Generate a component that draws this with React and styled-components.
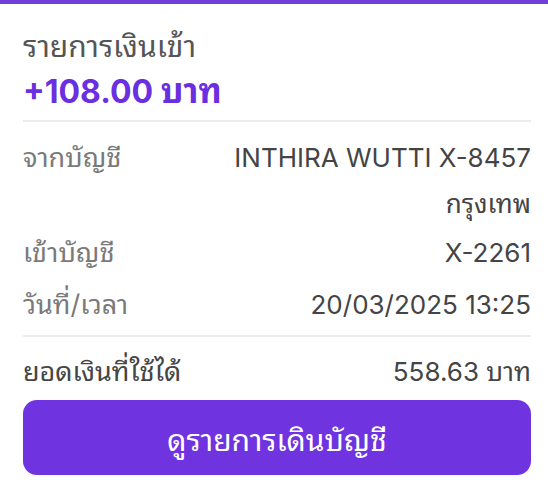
import React from "react";
import styled, { createGlobalStyle } from "styled-components";

const GlobalStyle = createGlobalStyle`
  html, body {
    margin: 0;
    padding: 0;
    background: #ffffff;
  }
  body {
    font-family: Inter, "Noto Sans Thai Looped", "Noto Sans Thai", "Noto Sans", sans-serif;
  }
`;

const Page = styled.div`
  width: 548px;
  height: 492px;
  box-sizing: border-box;
  border-top: 4px solid #7040d8;
  padding: 21px 17px 0 23px;
  display: flex;
  flex-direction: column;
`;

const Title = styled.div`
  font-size: 30px;
  line-height: 42px;
  color: #555555;
`;

const Amount = styled.div`
  font-size: 32px;
  line-height: 48px;
  height: 48px;
  font-weight: 700;
  color: #6a2fe0;
  padding-bottom: 5px;
`;

const Section = styled.div`
  border-top: 2px solid #ececec;
  display: flex;
  flex-direction: column;
  padding: ${(p) => p.$pad || "13px 0 4px"};
`;

const Row = styled.div`
  display: flex;
  justify-content: space-between;
  align-items: flex-start;
  font-size: 26px;
  line-height: ${(p) => p.$lh || "46px"};
`;

const Label = styled.span`
  font-size: 27px;
  color: ${(p) => (p.$dark ? "#454545" : "#7a7a7a")};
`;

const Value = styled.span`
  color: #444444;
  text-align: right;
`;

const Thai = styled.span`
  font-size: ${(p) => p.$size || "26px"};
`;

const Button = styled.button`
  margin-top: 5px;
  height: 75px;
  border: none;
  border-radius: 14px;
  background: #7033e0;
  color: #ffffff;
  font-family: inherit;
  font-size: 30px;
`;

export default function App() {
  return (
    <>
      <GlobalStyle />
      <Page>
        <Title>รายการเงินเข้า</Title>
        <Amount>
          +108.00 <Thai $size="34px">บาท</Thai>
        </Amount>
        <Section>
          <Row>
            <Label>จากบัญชี</Label>
            <Value>
              INTHIRA WUTTI X-8457
              <br />
              <Thai>กรุงเทพ</Thai>
            </Value>
          </Row>
          <Row $lh="52px">
            <Label>เข้าบัญชี</Label>
            <Value>X-2261</Value>
          </Row>
          <Row $lh="52px">
            <Label>วันที่/เวลา</Label>
            <Value>20/03/2025 13:25</Value>
          </Row>
        </Section>
        <Section $pad="12px 0 0">
          <Row>
            <Label $dark>ยอดเงินที่ใช้ได้</Label>
            <Value>
              558.63 <Thai>บาท</Thai>
            </Value>
          </Row>
          <Button>ดูรายการเดินบัญชี</Button>
        </Section>
      </Page>
    </>
  );
}
